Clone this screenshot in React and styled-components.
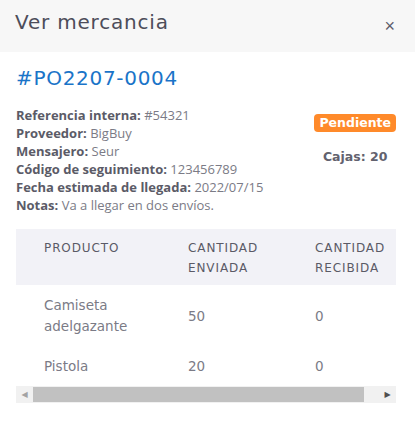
import styled, { createGlobalStyle } from "styled-components";

const Global = createGlobalStyle`
  body {
    margin: 0;
    background: #fff;
    font-family: "DejaVu Sans", "Open Sans", sans-serif;
  }
`;

const Modal = styled.div`
  width: 415px;
  height: 427px;
  background: #fff;
`;

const Header = styled.header`
  display: flex;
  align-items: center;
  justify-content: space-between;
  height: 52px;
  padding: 0 20px 0 15px;
  background: #f7f7f7;
  box-sizing: border-box;
`;

const Title = styled.h2`
  margin: 0 0 8px;
  font-size: 20px;
  font-weight: 400;
  letter-spacing: 0.8px;
  color: #4d4d5a;
`;

const Close = styled.button`
  border: none;
  background: none;
  padding: 0;
  color: #5d5d6c;
  font-size: 18px;
  line-height: 1;
  cursor: pointer;
`;

const Body = styled.div`
  padding: 14px 19px 0 16px;
`;

const Code = styled.div`
  font-size: 20px;
  letter-spacing: 0.7px;
  color: #1a74c8;
  margin-bottom: 16px;
`;

const Info = styled.div`
  display: flex;
  justify-content: space-between;
`;

const Lines = styled.div`
  font-family: "Open Sans", sans-serif;
  font-size: 13px;
  line-height: 18px;
  color: #7b7b86;
`;

const Label = styled.b`
  font-weight: 700;
  color: #5b5b67;
`;

const Side = styled.div`
  display: flex;
  flex-direction: column;
  align-items: center;
  padding-top: 8px;
`;

const Badge = styled.span`
  background: #ff8a2a;
  color: #fff;
  font-weight: 700;
  font-size: 12.5px;
  line-height: 18px;
  padding: 0 5px;
  border-radius: 4px;
`;

const Boxes = styled.div`
  margin-top: 17px;
  font-size: 12.5px;
  font-weight: 700;
  color: #62626e;
`;

const Scroll = styled.div`
  margin-top: 15px;
  overflow: hidden;
`;

const Table = styled.table`
  width: 397px;
  border-collapse: collapse;
  font-size: 13.5px;
  color: #7b7b86;
`;

const Th = styled.th`
  text-align: left;
  vertical-align: top;
  font-weight: 400;
  font-size: 12px;
  letter-spacing: 0.9px;
  color: #5a5a66;
  padding: 9px 0 7px 28px;
  line-height: 20px;
  background: #f2f2f7;
  width: ${(p) => p.$w}px;
  box-sizing: border-box;
`;

const Td = styled.td`
  padding: 10px 0 9px 28px;
  line-height: 21px;
  vertical-align: middle;
`;

const Bar = styled.div`
  display: flex;
  align-items: center;
  height: 17px;
  background: #f1f1f1;
`;

const Arrow = styled.span`
  width: 17px;
  display: flex;
  justify-content: center;
  color: ${(p) => (p.$off ? "#a3a3a3" : "#505050")};
  font-size: 8px;
`;

const Track = styled.div`
  flex: 1;
  height: 100%;
  display: flex;
  align-items: center;
`;

const Thumb = styled.div`
  height: 15px;
  background: #c1c1c1;
`;

const info = [
  ["Referencia interna:", "#54321"],
  ["Proveedor:", "BigBuy"],
  ["Mensajero:", "Seur"],
  ["Código de seguimiento:", "123456789"],
  ["Fecha estimada de llegada:", "2022/07/15"],
  ["Notas:", "Va a llegar en dos envíos."],
];

const rows = [
  ["Camiseta adelgazante", "50", "0"],
  ["Pistola", "20", "0"],
];

export default function App() {
  return (
    <Modal>
      <Global />
      <Header>
        <Title>Ver mercancia</Title>
        <Close>×</Close>
      </Header>
      <Body>
        <Code>#PO2207-0004</Code>
        <Info>
          <Lines>
            {info.map(([k, v]) => (
              <div key={k}>
                <Label>{k}</Label> {v}
              </div>
            ))}
          </Lines>
          <Side>
            <Badge>Pendiente</Badge>
            <Boxes>Cajas: 20</Boxes>
          </Side>
        </Info>
        <Scroll>
          <Table>
            <thead>
              <tr>
                <Th $w={144}>PRODUCTO</Th>
                <Th $w={127}>CANTIDAD ENVIADA</Th>
                <Th $w={126}>CANTIDAD RECIBIDA</Th>
              </tr>
            </thead>
            <tbody>
              {rows.map((r) => (
                <tr key={r[0]}>
                  {r.map((c, i) => (
                    <Td key={i}>{c}</Td>
                  ))}
                </tr>
              ))}
            </tbody>
          </Table>
        </Scroll>
        <Bar>
          <Arrow $off>◀</Arrow>
          <Track>
            <Thumb style={{ width: `${(380 / 397) * 100}%` }} />
          </Track>
          <Arrow>▶</Arrow>
        </Bar>
      </Body>
    </Modal>
  );
}
